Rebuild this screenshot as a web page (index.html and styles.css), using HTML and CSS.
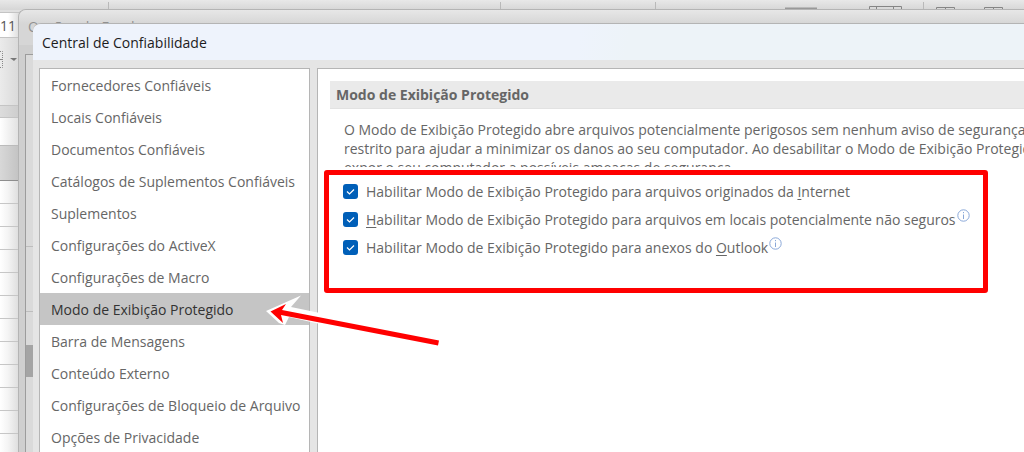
FILE: index.html
```html
<!DOCTYPE html>
<html lang="pt-BR">
<head>
<meta charset="utf-8">
<title>Central de Confiabilidade</title>
<link rel="stylesheet" href="styles.css">
</head>
<body>
<div class="desktop">
  <div class="sheet">
    <div class="ribbon-top">
      <svg class="ribbon-marks" width="1024" height="10" aria-hidden="true">
        <path d="M108.500 2v8M500.500 2v8M655.500 2v8M923.500 2v8" stroke="#b9b9b9"/>
        <path d="M785 8.500h32" stroke="#999" stroke-width="2"/>
        <path d="M869.500 10V6.500h32V10M876.500 10V7M893.500 10V7M936.500 10V7.500h18V10M945.500 10V7.500M984.500 10V7.500h18V10M993.500 10V7.500" fill="none" stroke="#858585"/>
      </svg>
    </div>
    <div class="font-size">11</div>
    <div class="ribbon-bottom">
      <svg width="18" height="68" aria-hidden="true">
        <path d="M0 13.500h2.500v16H0" fill="none" stroke="#888" stroke-dasharray="1 1"/>
        <path d="M0 21.500h2" stroke="#888"/>
        <path d="M10 20h7l-3 3z" fill="#777"/>
      </svg>
    </div>
    <div class="formula-edge"></div>
    <div class="formula"></div>
    <div class="column-head"></div>
    <div class="rows"></div>
  </div>

  <div class="window options">
    <div class="options-title">Opções do Excel</div>
    <div class="options-body">
      <div class="options-list">
        <i class="tick"></i><i class="tick"></i><i class="thumb"></i>
      </div>
    </div>
  </div>

  <main class="window trust">
    <h1 class="trust-title">Central de Confiabilidade</h1>
    <div class="trust-body">
      <nav class="menu">
        <button class="item">Fornecedores Confiáveis</button>
        <button class="item">Locais Confiáveis</button>
        <button class="item">Documentos Confiáveis</button>
        <button class="item">Catálogos de Suplementos Confiáveis</button>
        <button class="item">Suplementos</button>
        <button class="item">Configurações do ActiveX</button>
        <button class="item">Configurações de Macro</button>
        <button class="item selected" aria-current="page">Modo de Exibição Protegido</button>
        <button class="item">Barra de Mensagens</button>
        <button class="item">Conteúdo Externo</button>
        <button class="item">Configurações de Bloqueio de Arquivo</button>
        <button class="item">Opções de Privacidade</button>
      </nav>
      <section class="panel">
        <h2 class="band">Modo de Exibição Protegido</h2>
        <p class="intro">O Modo de Exibição Protegido abre arquivos potencialmente perigosos sem nenhum aviso de segurança, e<br>restrito para ajudar a minimizar os danos ao seu computador. Ao desabilitar o Modo de Exibição Protegido<br>expor o seu computador a possíveis ameaças de segurança.</p>
        <div class="choices">
          <div class="choice">
            <span class="box"><input type="checkbox" id="internet" checked><svg viewBox="0 0 15 15" aria-hidden="true"><path d="M4 7.500l2.500 2.500 4.500-4.500"/></svg></span>
            <label for="internet">Habilitar Modo de Exibição Protegido para arquivos originados da <u>I</u>nternet</label>
          </div>
          <div class="choice">
            <span class="box"><input type="checkbox" id="locais" checked><svg viewBox="0 0 15 15" aria-hidden="true"><path d="M4 7.500l2.500 2.500 4.500-4.500"/></svg></span>
            <label for="locais"><u>H</u>abilitar Modo de Exibição Protegido para arquivos em locais potencialmente não seguros</label>
            <svg class="info" viewBox="0 0 13 13" aria-hidden="true"><circle cx="6.500" cy="6.500" r="5.700"/><path d="M6.500 5.500v4.500M6.500 3v1.200"/></svg>
          </div>
          <div class="choice">
            <span class="box"><input type="checkbox" id="outlook" checked><svg viewBox="0 0 15 15" aria-hidden="true"><path d="M4 7.500l2.500 2.500 4.500-4.500"/></svg></span>
            <label for="outlook">Habilitar Modo de Exibição Protegido para anexos do <u>O</u>utlook</label>
            <svg class="info" viewBox="0 0 13 13" aria-hidden="true"><circle cx="6.500" cy="6.500" r="5.700"/><path d="M6.500 5.500v4.500M6.500 3v1.200"/></svg>
          </div>
        </div>
      </section>
    </div>
  </main>

  <svg class="arrow" viewBox="0 0 180 56" aria-hidden="true">
    <path fill="#fff" d="M6 17L41 1.500L31 13L60 19V30L29 23L25 31L19 29z"/>
    <path fill="#f00" d="M10.500 17.500L26 10L22 16L179 46.500L178 51.500L21 21L23 29z"/>
  </svg>
</div>
</body>
</html>
```

FILE: styles.css
```css
* { box-sizing: border-box; }

body {
  margin: 0;
  font: 14px/19px "Open Sans", "Noto Sans", sans-serif;
  color: #666;
}

.desktop {
  position: relative;
  height: 100vh;
  overflow: hidden;
  background: #fff;
}

.sheet { display: flex; flex-direction: column; height: 100%; }
.ribbon-top { height: 12px; background: linear-gradient(#e8e8e8, #d6d6d6 10px, #e0e0e0 10px); }
.ribbon-marks { display: block; }
.font-size {
  height: 26px;
  line-height: 25px;
  border: solid #c4c4c4;
  border-width: 1px 0;
  background: linear-gradient(90deg, #fff 8px, #e0e0e0 18px);
  color: #555;
}
.ribbon-bottom { height: 67px; background: linear-gradient(90deg, #ebebeb, #dadada 18px); }
.ribbon-bottom svg { display: block; }
.formula-edge {
  height: 13px;
  border: solid #c4c4c4;
  border-width: 1px 0;
  background: linear-gradient(90deg, #dcdcdc, #cecece 18px);
}
.formula { height: 27px; background: linear-gradient(90deg, #fff, #e2e2e2 18px); }
.column-head {
  height: 36px;
  border-top: 1px solid #bbb;
  border-bottom: 1px solid #8e8e8e;
  background: linear-gradient(90deg, #d8d8d8, #c4c4c4 18px);
}
.rows {
  flex: 1;
  background:
    repeating-linear-gradient(transparent 0 22px, #c6c6c6 22px 23px),
    linear-gradient(90deg, #fff, #f4f4f4 8px, #dfdfdf 18px);
}

.window { position: absolute; right: 0; bottom: 0; display: flex; flex-direction: column; }

.options {
  left: 18px;
  top: 9px;
  border: solid #b4b4b4;
  border-width: 1px 0 0 1px;
  border-radius: 8px 0 0 0;
  background: #cfcfcf;
  overflow: hidden;
}
.options-title {
  height: 35px;
  padding: 7px 9px;
  background: linear-gradient(#e7e7e7, #d6d6d6 14px);
  color: #909090;
}
.options-body { flex: 1; display: flex; padding: 9px 0 0 6px; }
.options-list {
  flex: 1;
  border: solid #9c9c9c;
  border-width: 1px 0 0 1px;
  background: #dadada;
}
.tick, .thumb { display: block; width: 8px; }
.tick { height: 1px; margin-top: 191px; background: #bdbdbd; }
.tick + .tick { margin-top: 64px; }
.thumb { height: 32px; margin-top: 33px; background: #a4a4a4; }

.trust {
  left: 33px;
  top: 23px;
  border-top: 1px solid #b4b4b4;
  border-radius: 8px 0 0 0;
  background: #e5e5e5;
  overflow: hidden;
}
.trust-title {
  margin: 0;
  height: 36px;
  padding: 9px;
  background: linear-gradient(100deg, #eef3fc 55%, #edf3f8 60%);
  color: #1c1c1c;
  font-size: 14px;
  font-weight: 400;
}
.trust-body {
  flex: 1;
  display: grid;
  grid-template-columns: 271px 1fr;
  gap: 7px;
  padding: 8px 0 0 6px;
}

.menu {
  display: grid;
  grid-template-columns: minmax(0, 1fr);
  grid-auto-rows: 32px;
  align-content: start;
  border: solid #b5b5b5;
  border-width: 1px 1px 0;
  background: #fff;
}
.item {
  border: 0;
  padding: 0 0 0 11px;
  background: none;
  color: inherit;
  font: inherit;
  text-align: left;
  white-space: nowrap;
}
.selected { background: #c5c5c5; color: #333; }

.panel {
  min-width: 0;
  padding-top: 12px;
  border: solid #b5b5b5;
  border-width: 1px 0 0 1px;
  background: #fff;
  overflow: hidden;
}
.band {
  margin: 0 0 11px 12px;
  height: 28px;
  padding: 4px 6px;
  border-bottom: 1px solid #e2e2e2;
  background: #eaeaea;
  font-size: 14px;
  font-weight: 700;
}
.intro {
  margin: 0 0 3px 26px;
  height: 47px;
  overflow: hidden;
  white-space: nowrap;
}
.choices {
  margin: 0 36px 0 6px;
  padding: 2px 14px 27px;
  border: 5px solid #f00;
  border-radius: 3px;
}
.choice { display: flex; align-items: center; height: 28px; white-space: nowrap; }
.box { display: grid; width: 15px; height: 15px; margin-right: 8px; }
.box > * { grid-area: 1 / 1; width: 15px; height: 15px; margin: 0; }
.box input { appearance: none; border-radius: 3px; background: #005fb8; }
.box svg { pointer-events: none; fill: none; stroke: #fff; stroke-width: 1.2; }
u { text-underline-offset: 2px; }
.info {
  flex: none;
  align-self: flex-start;
  width: 13px;
  height: 13px;
  margin: 4px 0 0 1px;
  fill: none;
  stroke: #8aa8d8;
}

.arrow { position: absolute; left: 260px; top: 294px; width: 180px; }
```
